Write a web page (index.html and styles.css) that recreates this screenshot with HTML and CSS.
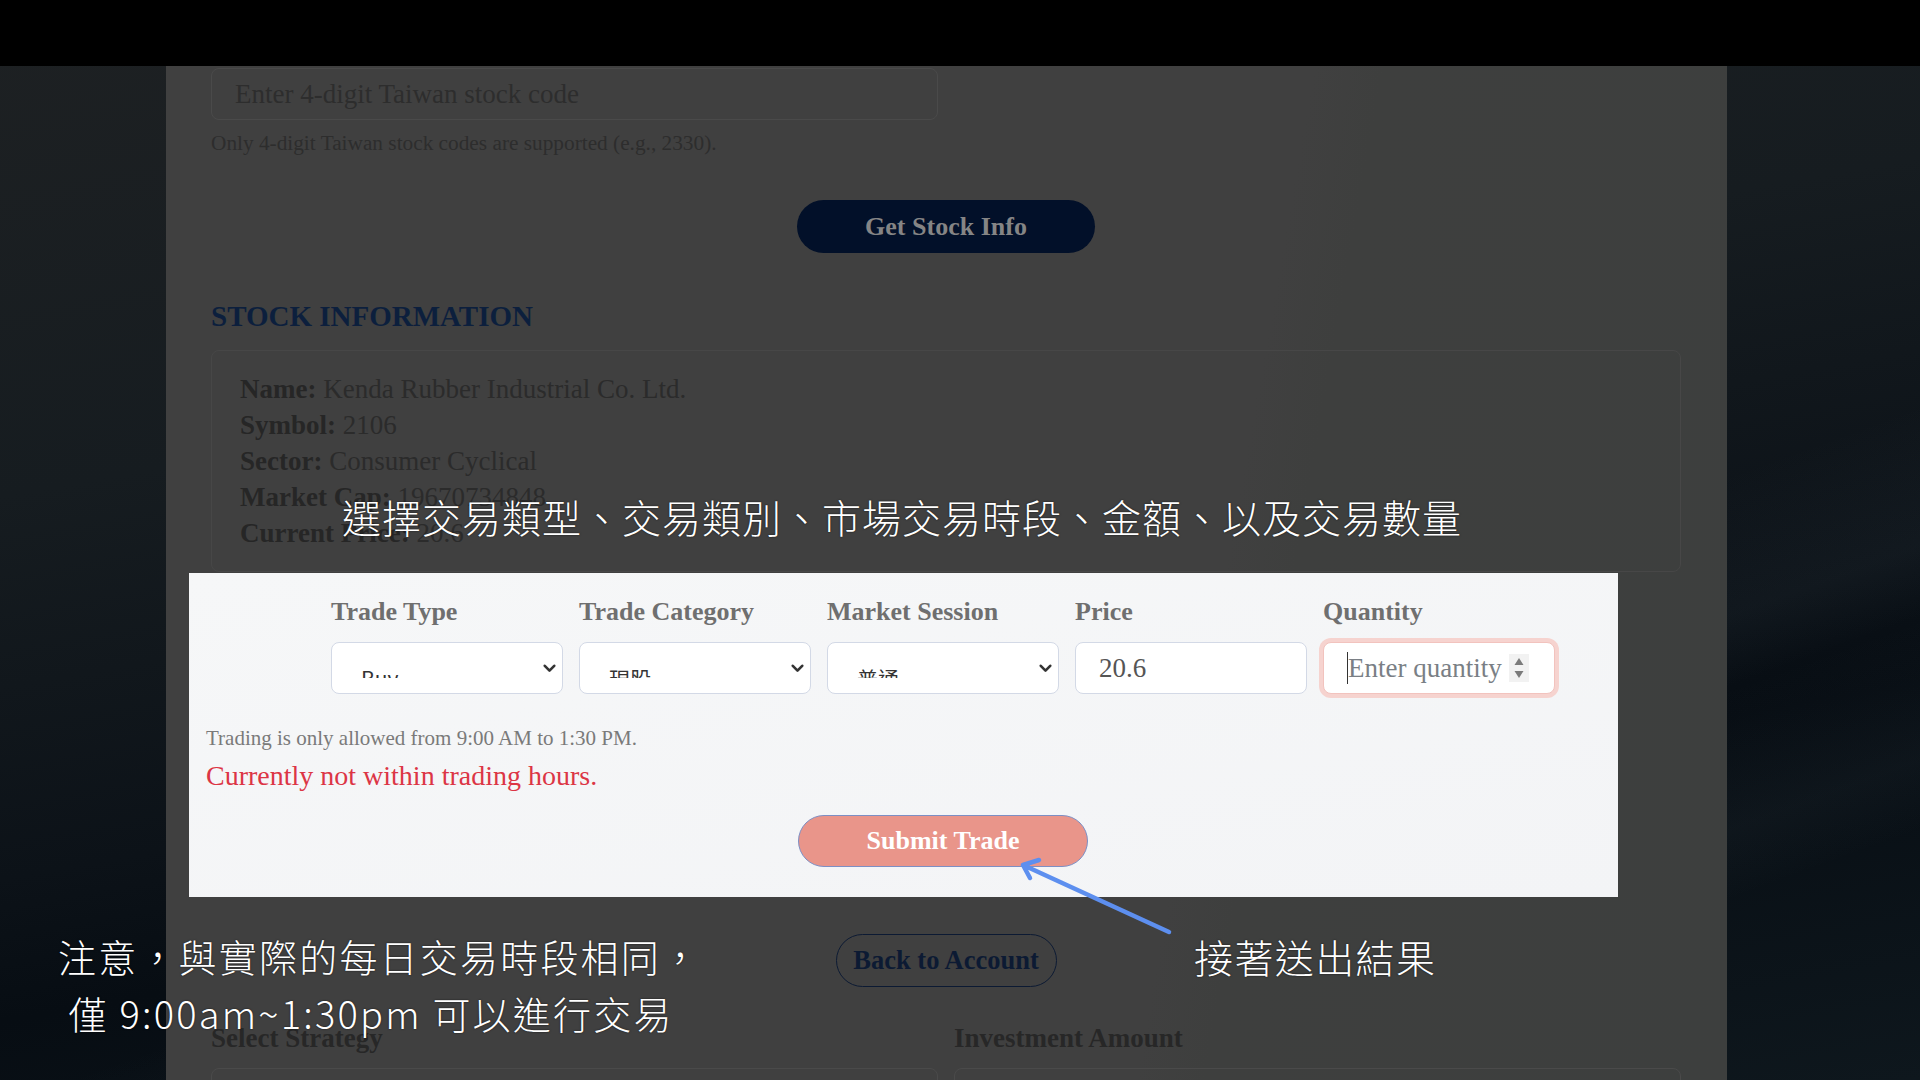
FILE: index.html
```html
<!DOCTYPE html>
<html lang="zh-Hant">
<head>
<meta charset="utf-8">
<title>Trade</title>
<link rel="stylesheet" href="styles.css">
</head>
<body>
<div class="topbar"></div>
<div class="stage">
  <main class="page">
    <div class="code-input">Enter 4-digit Taiwan stock code</div>
    <p class="hint">Only 4-digit Taiwan stock codes are supported (e.g., 2330).</p>
    <div class="center actions-top"><button class="btn-navy">Get Stock Info</button></div>
    <h2 class="section-title">STOCK INFORMATION</h2>
    <div class="info-box">
      <p><b>Name:</b> Kenda Rubber Industrial Co. Ltd.</p>
      <p><b>Symbol:</b> 2106</p>
      <p><b>Sector:</b> Consumer Cyclical</p>
      <p><b>Market Cap:</b> 19670734848</p>
      <p><b>Current Price:</b> 20.6</p>
    </div>

    <section class="spotlight">
      <div class="form-inner">
        <div class="fields">
          <div class="field">
            <label>Trade Type</label>
            <div class="control select"><span class="clip">Buy</span>
              <svg class="chev" width="13" height="9" viewBox="0 0 13 9"><path d="M1.8 1.8 L6.5 6.6 L11.2 1.8" fill="none" stroke="#333" stroke-width="2.6" stroke-linecap="round" stroke-linejoin="round"/></svg>
            </div>
          </div>
          <div class="field">
            <label>Trade Category</label>
            <div class="control select"><span class="clip">現股</span>
              <svg class="chev" width="13" height="9" viewBox="0 0 13 9"><path d="M1.8 1.8 L6.5 6.6 L11.2 1.8" fill="none" stroke="#333" stroke-width="2.6" stroke-linecap="round" stroke-linejoin="round"/></svg>
            </div>
          </div>
          <div class="field">
            <label>Market Session</label>
            <div class="control select"><span class="clip">普通</span>
              <svg class="chev" width="13" height="9" viewBox="0 0 13 9"><path d="M1.8 1.8 L6.5 6.6 L11.2 1.8" fill="none" stroke="#333" stroke-width="2.6" stroke-linecap="round" stroke-linejoin="round"/></svg>
            </div>
          </div>
          <div class="field">
            <label>Price</label>
            <div class="control text-input">20.6</div>
          </div>
          <div class="field">
            <label>Quantity</label>
            <div class="control text-input focus">
              <span class="caret"></span><span class="placeholder">Enter quantity</span>
              <span class="spin">
                <svg width="12" height="26" viewBox="0 0 12 26"><path d="M6 3 L10.5 10 L1.5 10 Z" fill="#7b7b7b"/><path d="M6 23 L10.5 16 L1.5 16 Z" fill="#7b7b7b"/></svg>
              </span>
            </div>
          </div>
        </div>
        <p class="notice">Trading is only allowed from 9:00 AM to 1:30 PM.</p>
        <p class="error">Currently not within trading hours.</p>
        <div class="center submit-row"><button class="btn-submit">Submit Trade</button></div>
      </div>
    </section>

    <div class="center back-row"><button class="btn-outline">Back to Account</button></div>
    <div class="strategy-grid">
      <div><div class="dim-label">Select Strategy</div><div class="dim-field"></div></div>
      <div><div class="dim-label">Investment Amount</div><div class="dim-field"></div></div>
    </div>
  </main>
</div>

<div class="caption caption-top">選擇交易類型、交易類別、市場交易時段、金額、以及交易數量</div>
<div class="caption caption-left">注意，與實際的每日交易時段相同，
 僅 9:00am~1:30pm 可以進行交易</div>
<div class="caption caption-right">接著送出結果</div>

<svg class="arrow" width="170" height="90" viewBox="0 0 170 90">
  <path d="M154 77 L8 10 M8 10 L24 5 M8 10 L15 23" fill="none" stroke="#5d8fef" stroke-width="4.5" stroke-linecap="round" stroke-linejoin="round"/>
</svg>
</body>
</html>
```

FILE: styles.css
```css
html, body {
  margin: 0;
  height: 1080px;
  overflow: hidden;
}

body {
  position: relative;
  font-family: "Liberation Serif", "Times New Roman", serif;
  background:
    linear-gradient(160deg, rgba(255,255,255,0) 62%, rgba(120,140,150,0.06) 70%, rgba(255,255,255,0) 74%, rgba(120,140,150,0.05) 82%, rgba(255,255,255,0) 86%),
    linear-gradient(170deg, #1e2123 0%, #161c20 35%, #0c1218 62%, #070d13 72%, #0e171d 100%);
}

.topbar {
  height: 66px;
  background: #000;
}

.stage {
  display: flex;
  height: 1014px;
}

.page {
  margin-left: 166px;
  width: 1561px;
  box-sizing: border-box;
  padding: 2px 46px 0 45px;
  background: linear-gradient(100deg, #404040 0%, #404040 66%, #3e3f3e 70%, #3d3f3e 100%);
  overflow: hidden;
}

.code-input {
  width: 727px;
  height: 52px;
  box-sizing: border-box;
  border: 1px solid #4a4a4a;
  border-radius: 8px;
  padding-left: 23px;
  display: flex;
  align-items: center;
  font-size: 27px;
  color: #2d2d2d;
}

.hint {
  margin: 11px 0 0;
  font-size: 21.3px;
  line-height: 24px;
  color: #2d2d2d;
}

.center {
  display: flex;
  justify-content: center;
}

.actions-top {
  margin-top: 45px;
}

.btn-navy {
  width: 298px;
  height: 53px;
  border: none;
  border-radius: 27px;
  background: #021029;
  color: #858585;
  font: bold 26px "Liberation Serif", serif;
}

.section-title {
  margin: 47px 0 0;
  font-size: 29px;
  line-height: 32px;
  font-weight: bold;
  color: #0c1f3d;
}

.info-box {
  margin-top: 18px;
  border: 1px solid #474747;
  border-radius: 8px;
  padding: 20px 28px 20px;
}

.info-box p {
  margin: 0;
  font-size: 27px;
  line-height: 36px;
  color: #2b2b2b;
}

.info-box b {
  color: #262626;
}

/* highlighted trade form */
.spotlight {
  margin: 1px 0 0 -22px;
  width: 1429px;
  height: 324px;
  box-sizing: border-box;
  padding: 24px 0 0 17px;
  background: linear-gradient(170deg, #f6f7f8 0%, #f3f4f6 100%);
  overflow: hidden;
}

.form-inner {
  width: 1474px;
}

.fields {
  display: grid;
  grid-template-columns: repeat(5, 232px);
  column-gap: 16px;
  justify-content: center;
}

.field label {
  display: block;
  font-size: 26px;
  line-height: 30px;
  font-weight: bold;
  color: #6f6f6f;
}

.control {
  margin-top: 15px;
  height: 52px;
  box-sizing: border-box;
  background: #fff;
  border: 1px solid #d3d9e6;
  border-radius: 8px;
  display: flex;
  align-items: center;
}

.select {
  padding: 0 6px 0 29px;
}

.clip {
  align-self: flex-start;
  margin-top: 25px;
  height: 10px;
  overflow: hidden;
  font: 21px/21px "Noto Sans CJK TC", "Noto Sans", sans-serif;
  color: #333;
}

.chev {
  margin-left: auto;
}

.text-input {
  padding: 0 10px 0 23px;
  font-size: 27px;
  color: #555;
}

.focus {
  border-color: #f2c3be;
  box-shadow: 0 0 0 4px #f6d3cf;
}

.caret {
  width: 1px;
  height: 32px;
  background: #333;
}

.placeholder {
  color: #7a7f85;
}

.spin {
  margin-left: 7px;
  width: 20px;
  height: 28px;
  background: #f2f2f2;
  display: flex;
  align-items: center;
  justify-content: center;
}

.notice {
  margin: 32px 0 0;
  font-size: 21px;
  line-height: 24px;
  color: #7a7a7a;
}

.error {
  margin: 11px 0 0;
  font-size: 28px;
  line-height: 30px;
  color: #dc3545;
}

.submit-row {
  margin-top: 24px;
}

.btn-submit {
  width: 290px;
  height: 52px;
  border: 1.5px solid #7d8fc4;
  border-radius: 26px;
  background: #e9958a;
  color: #fff;
  font: bold 26px "Liberation Serif", serif;
}

.back-row {
  margin-top: 37px;
}

.btn-outline {
  width: 221px;
  height: 53px;
  border: 1.5px solid #0c1a33;
  border-radius: 27px;
  background: transparent;
  color: #0c1a33;
  font: bold 26.5px "Liberation Serif", serif;
}

.strategy-grid {
  margin-top: 36px;
  display: grid;
  grid-template-columns: 727px 727px;
  column-gap: 16px;
}

.dim-label {
  font-size: 27px;
  line-height: 30px;
  font-weight: bold;
  color: #272727;
}

.dim-field {
  margin-top: 15px;
  height: 52px;
  border: 1px solid #4a4a4a;
  border-radius: 8px;
}

/* tutorial captions */
.caption {
  position: absolute;
  color: #fff;
  font-family: "Noto Sans CJK TC", "Noto Sans", sans-serif;
  font-weight: 300;
  text-shadow: 0 0 2px rgba(0,0,0,0.7);
  white-space: pre;
}

.caption-top {
  left: 342px;
  top: 495px;
  font-size: 39px;
  line-height: 42px;
  letter-spacing: 1px;
}

.caption-left {
  left: 58px;
  top: 927px;
  font-size: 38px;
  line-height: 57px;
  letter-spacing: 2.2px;
}

.caption-right {
  left: 1194px;
  top: 935px;
  font-size: 39px;
  line-height: 42px;
  letter-spacing: 1.4px;
}

.arrow {
  position: absolute;
  left: 1015px;
  top: 855px;
}
```
